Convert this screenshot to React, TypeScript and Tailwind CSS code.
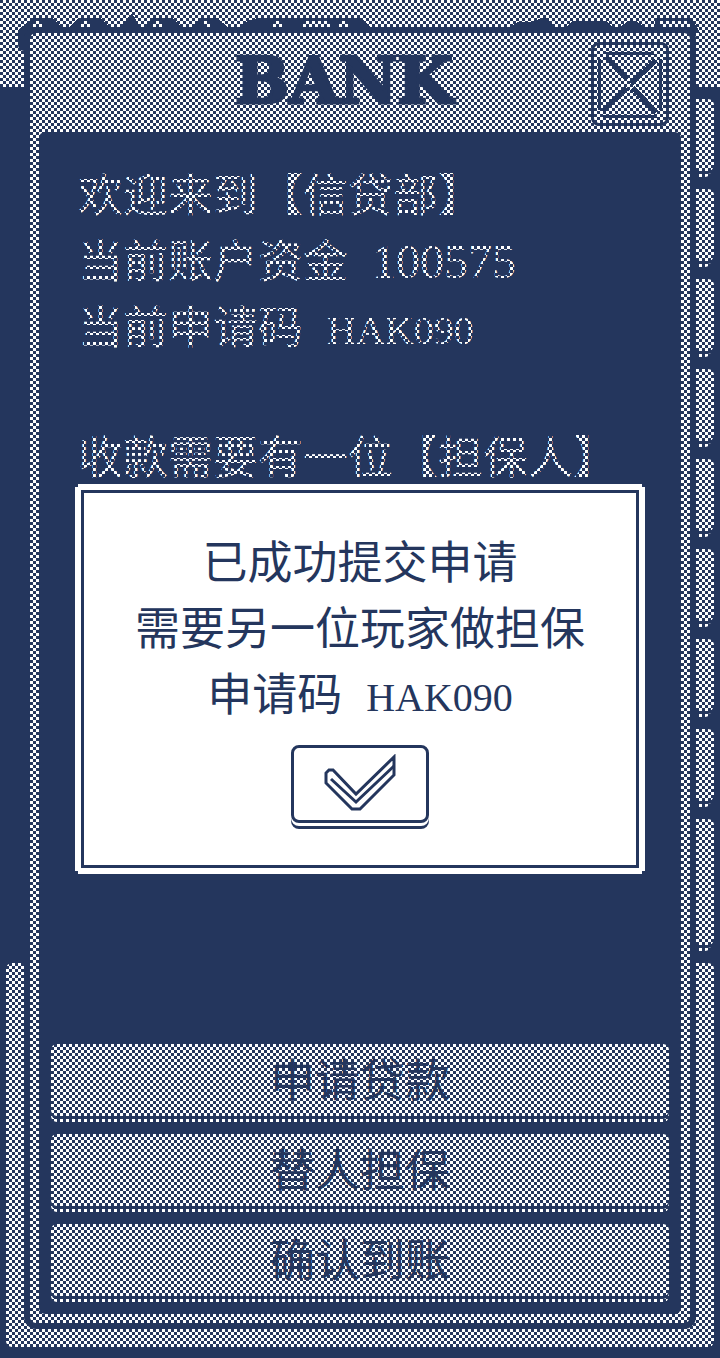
import React from 'react';

const lobbyRows = [1, 2, 3, 4, 5, 6, 7, 8];

const actions = ['申请贷款', '替人担保', '确认到账'];

const CloseIcon: React.FC = () => (
  <svg className="w-full h-full" viewBox="0 0 72 75" fill="none" stroke="#24365d" strokeWidth="4" shapeRendering="crispEdges" aria-hidden="true">
    <path d="M5 12V63M66 12V63" strokeWidth="3" />
    <path d="M12 10L33 33M39 41L62 66M62 14L37 37M33 42L9 64" strokeWidth="5" />
    <path d="M12 7H60M9 70H63" strokeWidth="3" />
  </svg>
);

const CheckIcon: React.FC = () => (
  <svg className="w-[75px] h-[60px]" viewBox="0 0 75 60" fill="none" stroke="#24365d" strokeWidth="3" aria-hidden="true">
    <path d="M3 29V19L6 16H10L33 40L71 3V21L37 55H29L3 29Z" />
    <path d="M8 25L33 48L71 12" />
  </svg>
);

// Lower part of the lobby sign that peeks out above the bank window
const LobbySign: React.FC = () => (
  <svg className="w-full h-[33px]" viewBox="0 0 720 33" preserveAspectRatio="none" fill="#24365d" shapeRendering="crispEdges" aria-hidden="true">
    <path d="M18 33V30L33 18H52L61 27H70L78 18H100L110 27H122L127 18L131 14L135 18L139 27H145L152 18H172L182 27H192L200 18H217L228 27H240L248 21L257 18H362L370 27H510L518 22H530L534 21L545 17L556 27H566L572 21H606L612 27H620L628 21H636L644 27H655V18H692L700 33Z" />
    <path fill="#fff" d="M33 24L36 21H42V27H33ZM81 24L84 21H90V27H81ZM153 24L156 21H162V27H153ZM204 21H210V27H204ZM273 24L276 21H282V27H273ZM303 24L306 21H330V27H303ZM339 21H348V27H339ZM660 21H690V27H660Z" />
  </svg>
);

const App: React.FC = () => {
  return (
    <div className="grid min-h-screen bg-[#24365d] text-[#24365d] text-[45px] leading-[66px] font-['Noto_Sans_CJK_SC','Noto_Sans_CJK_TC',sans-serif]">
      {/* Lobby behind the window */}
      <div className="[grid-area:1/1] flex flex-col" aria-hidden="true">
        <div className="h-[87px] bg-white relative">
          <LobbySign />
          <div className="absolute left-[18px] top-[27px] w-3 h-6 rounded-l-md bg-[#24365d]" />
        </div>
        <div className="w-1/2 ml-auto pr-[6px] pt-3">
          {lobbyRows.map((row) => (
            <div key={row} className="h-[72px] mb-[18px] rounded-md bg-white shadow-[0_3px_0_#24365d,-3px_6px_0_#fff]" />
          ))}
          <div className="h-[126px] mb-[18px] rounded-md bg-white shadow-[0_3px_0_#24365d,-3px_6px_0_#fff]" />
        </div>
        <div className="flex-1 mx-[6px] mb-[11px] rounded-md bg-white" />
      </div>

      {/* Bank window */}
      <main className="[grid-area:1/1] relative mx-6 mt-[27px] mb-[29px] flex flex-col rounded-xl border-6 border-[#24365d] bg-white">
        <header className="relative h-[99px] flex items-center justify-center pr-8 pb-1">
          <h1 className="font-['DejaVu_Serif',serif] font-bold text-[64px] leading-[66px] [-webkit-text-stroke:3px_#24365d]">BANK</h1>
          <button type="button" aria-label="关闭" className="absolute right-[21px] top-[9px] w-[78px] h-[84px] rounded-lg border-3 border-[#24365d]">
            <CloseIcon />
          </button>
        </header>
        <div className="flex-1 flex flex-col justify-between mx-[9px] mb-[9px] p-3 pt-7 rounded-md bg-[#24365d]">
          <section className="px-[27px] text-white">
            <p>欢迎来到【信贷部】</p>
            <p className="flex items-baseline gap-6">
              当前账户资金
              <span className="font-['Liberation_Serif',serif] text-[48px] leading-none">100575</span>
            </p>
            <p className="flex items-baseline gap-6">
              当前申请码
              <span className="font-['Liberation_Serif',serif] text-[40px] leading-none">HAK090</span>
            </p>
            <p className="mt-16">收款需要有一位【担保人】</p>
          </section>
          <div className="flex flex-col gap-[18px] pb-[6px]">
            {actions.map((label) => (
              <button key={label} type="button" className="h-[72px] pb-1 rounded-md bg-white shadow-[0_3px_0_#24365d,0_6px_0_#fff]">
                {label}
              </button>
            ))}
          </div>
        </div>
      </main>

      {/* Dithered shade over everything below the dialog */}
      <div className="[grid-area:1/1] z-10 bg-[conic-gradient(transparent_25%,#24365d_0_50%,transparent_0_75%,#24365d_0)] bg-[length:6px_6px]" />

      <div
        role="dialog"
        aria-modal="true"
        aria-labelledby="notice"
        className="[grid-area:1/1] z-20 self-center mx-[75px] bg-white p-[6px] [clip-path:polygon(3px_0,calc(100%-3px)_0,calc(100%-3px)_3px,100%_3px,100%_calc(100%-3px),calc(100%-3px)_calc(100%-3px),calc(100%-3px)_100%,3px_100%,3px_calc(100%-3px),0_calc(100%-3px),0_3px,3px_3px)]"
      >
        <div className="flex flex-col items-center gap-5 border-3 border-[#24365d] pt-[34px] pb-[42px]">
          <div id="notice" className="flex flex-col items-center">
            <p>已成功提交申请</p>
            <p>需要另一位玩家做担保</p>
            <p className="flex items-baseline gap-6">
              申请码
              <span className="font-['Liberation_Serif',serif] text-[40px] leading-none">HAK090</span>
            </p>
          </div>
          <button
            type="button"
            aria-label="确定"
            className="flex items-center justify-center w-[138px] h-[78px] rounded-lg border-3 border-[#24365d] bg-white shadow-[0_3px_0_#fff,0_6px_0_#24365d]"
          >
            <CheckIcon />
          </button>
        </div>
      </div>
    </div>
  );
};

export default App;
